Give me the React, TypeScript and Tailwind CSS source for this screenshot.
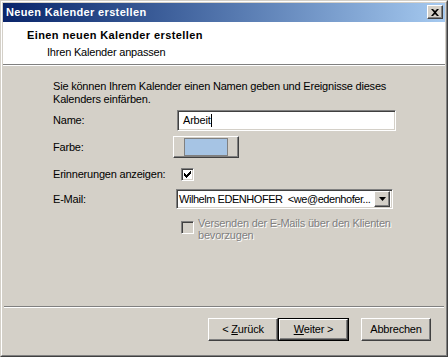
import React from "react";

const raised =
  "border border-t-white border-l-white border-r-[#404040] border-b-[#404040] shadow-[inset_-1px_-1px_0_#808080,inset_1px_1px_0_#d4d0c8]";
const sunken =
  "border border-t-[#808080] border-l-[#808080] border-r-white border-b-white shadow-[inset_1px_1px_0_#404040,inset_-1px_-1px_0_#d4d0c8]";

function Check() {
  return (
    <svg width="7" height="7" viewBox="0 0 7 7" className="block">
      <path d="M0 2h1v1h1v1h1v-1h1v-1h1v-1h1v-1h1v3h-1v1h-1v1h-1v1h-1v1h-1v-1h-1v-1h-1z" fill="#000" />
    </svg>
  );
}

export default function App() {
  return (
    <div
      className="w-[448px] h-[357px] bg-[#d4d0c8] border border-t-[#d4d0c8] border-l-[#d4d0c8] border-r-[#404040] border-b-[#404040] text-[11px] text-black tracking-[-0.2px]"
      style={{ fontFamily: '"Liberation Sans", Arial, sans-serif' }}
    >
      <div className="h-full border border-t-white border-l-white border-r-[#808080] border-b-[#808080] p-px flex flex-col">
        {/* Titelleiste */}
        <div className="h-[19px] shrink-0 bg-gradient-to-r from-[#0a246a] to-[#a6caf0] flex items-center pl-[3px] pr-[2px] pb-px">
          <span className="font-bold text-white leading-none tracking-[0.35px]">Neuen Kalender erstellen</span>
          <div className={`ml-auto w-[16px] h-[14px] bg-[#d4d0c8] flex items-center justify-center ${raised}`}>
            <svg width="8" height="7" viewBox="0 0 8 7">
              <path d="M0 0h2l2 2l2-2h2l-3 3.5l3 3.5h-2l-2-2l-2 2h-2l3-3.5z" fill="#000" />
            </svg>
          </div>
        </div>

        {/* Kopfbereich */}
        <div className="h-[43px] shrink-0 bg-white border-b border-[#808080] pt-[7px]">
          <div className="pl-[24px] font-bold leading-[13px] tracking-[0.4px]">Einen neuen Kalender erstellen</div>
          <div className="pl-[44px] leading-[13px] mt-[4px]">Ihren Kalender anpassen</div>
        </div>
        <div className="h-px shrink-0 bg-white" />

        {/* Inhalt */}
        <div className="flex-1 pl-[50px] pt-[14px]">
          <p className="leading-[13px]">
            Sie können Ihrem Kalender einen Namen geben und Ereignisse dieses
            <br />
            Kalenders einfärben.
          </p>

          <div className="flex items-center h-[21px] mt-[4px]">
            <span className="w-[124px]">Name:</span>
            <div className={`w-[219px] h-[21px] bg-white flex items-center pl-[5px] ${sunken}`}>
              <span>Arbeit</span>
              <span className="w-px h-[13px] bg-black" />
            </div>
          </div>

          <div className="flex items-center h-[22px] mt-[5px]">
            <span className="w-[120px]">Farbe:</span>
            <div className={`w-[66px] h-[22px] bg-[#d4d0c8] flex items-center justify-center ${raised}`}>
              <div className="w-[44px] h-[18px] bg-[#a6c4e4] border border-[#808080]" />
            </div>
          </div>

          <div className="flex items-center h-[14px] mt-[9px]">
            <span className="w-[128px]">Erinnerungen anzeigen:</span>
            <div className={`w-[13px] h-[13px] bg-white flex items-center justify-center ${sunken}`}>
              <Check />
            </div>
          </div>

          <div className="flex items-center h-[20px] mt-[8px]">
            <span className="w-[123px]">E-Mail:</span>
            <div className={`w-[217px] h-[20px] bg-white flex items-center pl-[2px] pr-[2px] ${sunken}`}>
              <span className="flex-1 min-w-0 whitespace-nowrap tracking-[-0.45px]">Wilhelm EDENHOFER &nbsp;&lt;we@edenhofer...</span>
              <div className={`shrink-0 w-[16px] h-[16px] bg-[#d4d0c8] flex items-center justify-center ${raised}`}>
                <svg width="7" height="4" viewBox="0 0 7 4">
                  <path d="M0 0h7l-3.5 4z" fill="#000" />
                </svg>
              </div>
            </div>
          </div>

          <div className="flex mt-[8px]">
            <div className={`ml-[128px] mt-[4px] w-[13px] h-[13px] bg-[#d4d0c8] ${sunken}`} />
            <div className="ml-[4px] leading-[12px] text-[#808080] [text-shadow:1px_1px_0_#fff]">
              Versenden der E-Mails über den Klienten
              <br />
              bevorzugen
            </div>
          </div>
        </div>

        {/* Trennlinie */}
        <div className="h-px shrink-0 bg-[#808080] mx-px" />
        <div className="h-px shrink-0 bg-white mx-px" />

        {/* Schaltflächen */}
        <div className="h-[46px] shrink-0 flex items-start justify-end pt-[10px] pr-[14px]">
          <button className={`w-[70px] h-[23px] bg-[#d4d0c8] ${raised}`}>
            &lt; <span className="underline">Z</span>urück
          </button>
          <div className="border border-black">
            <button className={`w-[69px] h-[21px] bg-[#d4d0c8] flex items-center justify-center ${raised}`}>
              <span className="underline">W</span>eiter &gt;
            </button>
          </div>
          <button className={`ml-[12px] w-[70px] h-[23px] bg-[#d4d0c8] ${raised}`}>Abbrechen</button>
        </div>
      </div>
    </div>
  );
}
